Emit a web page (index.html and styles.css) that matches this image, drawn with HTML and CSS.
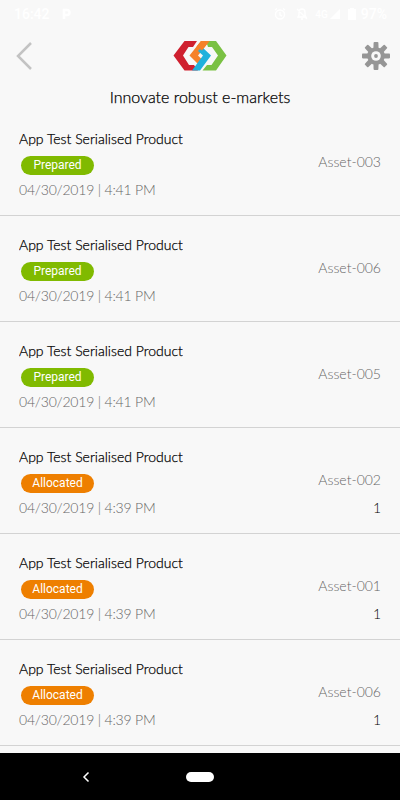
FILE: index.html
```html
<!DOCTYPE html>
<html lang="en">
<head>
    <meta charset="UTF-8">
    <meta name="viewport" content="width=device-width, initial-scale=1.0">
    <title>Assets</title>
    <link rel="stylesheet" href="styles.css">
</head>
<body>
    <div class="status">
        <span class="time">16:42</span>
        <svg class="parking" width="12" height="12" viewBox="0 0 12 12"><path d="M4 11V2h3a2.5 2.5 0 0 1 0 5H4" fill="none" stroke="#fff" stroke-width="2.5"/></svg>
        <div class="status-icons">
            <svg width="12" height="12" viewBox="0 0 12 12" fill="none" stroke="#fff" stroke-width="1.4"><circle cx="6" cy="6.5" r="4.5"/><path d="M6 4v3l2 1M1 2l2-1.500M11 2L9 .5"/></svg>
            <svg class="bell" width="12" height="12" viewBox="0 0 12 12" fill="none" stroke="#fff" stroke-width="1.4"><path d="M2 9h8L9 7V4a3 3 0 0 0-6 0v3zM5 11h2M1 1l10 10"/></svg>
            <span class="network">4G</span>
            <svg class="signal" width="10" height="10" viewBox="0 0 10 10"><path d="M0 10L10 0v10z" fill="#fff"/></svg>
            <svg class="battery" width="8" height="12" viewBox="0 0 8 12"><path d="M0 1h2V0h4v1h2v11H0z" fill="#fff"/></svg>
            <span class="percent">97%</span>
        </div>
    </div>
    <header class="header">
        <svg class="back" width="18" height="30" viewBox="0 0 18 30"><path d="M16 2L3 15l13 13" fill="none" stroke="#c3c3c3" stroke-width="2.500"/></svg>
        <svg class="logo" width="54" height="32" viewBox="0 0 54 32">
            <path d="M11.500 1H24l-4 6h-4.500L10 15.500 16 25h5l4 5.500H11.500L.5 15.500z" fill="#cf202f"/>
            <path d="M33 1h10l10.500 14.500L43 30.500H29.500L34 25h4.500l6.500-9.500L39 7h-4z" fill="#7ac143"/>
            <path d="M28 1h8.500L25 15.500l5 5-4 4.500-9.500-9.500z" fill="#f5822a"/>
            <path d="M29 7l9 8.500-11 15h-8L30 15.500l-5-4.500z" fill="#1fb1dc"/>
            <path d="M28 1h8.500L29 10.500l-5.500-4z" fill="#f5822a"/>
        </svg>
        <svg class="gear" width="28" height="28" viewBox="-14 -14 28 28">
            <defs><path id="tooth" d="M-2.600-7L-2.400-13.200Q-2.200-14-1.500-14h3Q2.200-14 2.400-13.200L2.600-7z"/></defs>
            <g fill="#969696">
                <use href="#tooth"/>
                <use href="#tooth" transform="rotate(45)"/>
                <use href="#tooth" transform="rotate(90)"/>
                <use href="#tooth" transform="rotate(135)"/>
                <use href="#tooth" transform="rotate(180)"/>
                <use href="#tooth" transform="rotate(225)"/>
                <use href="#tooth" transform="rotate(270)"/>
                <use href="#tooth" transform="rotate(315)"/>
                <circle r="8.800"/>
            </g>
            <circle r="4.800" fill="#f8f8f8"/>
            <circle r="1.900" fill="#969696"/>
        </svg>
    </header>
    <h1 class="title">Innovate robust e-markets</h1>
    <div class="list">
        <div class="item">
            <div class="info">
                <div class="name">App Test Serialised Product</div>
                <div class="badge prepared">Prepared</div>
                <div class="date">04/30/2019 | 4:41 PM</div>
            </div>
            <div class="side"><div class="asset">Asset-003</div></div>
        </div>
        <div class="item">
            <div class="info">
                <div class="name">App Test Serialised Product</div>
                <div class="badge prepared">Prepared</div>
                <div class="date">04/30/2019 | 4:41 PM</div>
            </div>
            <div class="side"><div class="asset">Asset-006</div></div>
        </div>
        <div class="item">
            <div class="info">
                <div class="name">App Test Serialised Product</div>
                <div class="badge prepared">Prepared</div>
                <div class="date">04/30/2019 | 4:41 PM</div>
            </div>
            <div class="side"><div class="asset">Asset-005</div></div>
        </div>
        <div class="item">
            <div class="info">
                <div class="name">App Test Serialised Product</div>
                <div class="badge allocated">Allocated</div>
                <div class="date">04/30/2019 | 4:39 PM</div>
            </div>
            <div class="side"><div class="asset">Asset-002</div><div class="count">1</div></div>
        </div>
        <div class="item">
            <div class="info">
                <div class="name">App Test Serialised Product</div>
                <div class="badge allocated">Allocated</div>
                <div class="date">04/30/2019 | 4:39 PM</div>
            </div>
            <div class="side"><div class="asset">Asset-001</div><div class="count">1</div></div>
        </div>
        <div class="item">
            <div class="info">
                <div class="name">App Test Serialised Product</div>
                <div class="badge allocated">Allocated</div>
                <div class="date">04/30/2019 | 4:39 PM</div>
            </div>
            <div class="side"><div class="asset">Asset-006</div><div class="count">1</div></div>
        </div>
    </div>
    <nav class="navbar">
        <svg class="nav-back" width="8" height="12" viewBox="0 0 8 12"><path d="M6.500 1.500L2 6l4.500 4.500" fill="none" stroke="#fff" stroke-width="1.500"/></svg>
        <div class="home"></div>
    </nav>
</body>
</html>
```
FILE: styles.css
```css
* {
    box-sizing: border-box;
}
body {
    margin: 0;
    height: 800px;
    display: flex;
    flex-direction: column;
    overflow: hidden;
    background-color: #f8f8f8;
    font-family: Lato, "Liberation Sans", sans-serif;
    font-weight: 300;
    color: #000;
}
/* 状态栏 */
.status {
    height: 28px;
    flex: none;
    display: flex;
    align-items: center;
    padding: 0 13px 0 14px;
    font: 500 14px Roboto, sans-serif;
    color: #fff;
}
.parking {
    margin-left: 10px;
}
.status-icons {
    margin-left: auto;
    display: flex;
    align-items: center;
}
.bell {
    margin-left: 10px;
}
.network {
    margin-left: 7px;
    font-size: 10px;
}
.signal {
    margin-left: 2px;
}
.battery {
    margin: 0 5px 0 8px;
}
.header {
    height: 56px;
    flex: none;
    display: flex;
    align-items: center;
    justify-content: space-between;
    padding: 0 10px 0 15px;
}
.logo {
    margin-left: 4px;
}
.title {
    margin: 0;
    height: 26px;
    flex: none;
    font-size: 16px;
    font-weight: 300;
    line-height: 26px;
    text-align: center;
    -webkit-text-stroke: 0.25px #000;
}
.list {
    height: 643px;
    flex: none;
    overflow: hidden;
}
.item {
    height: 106.08px;
    display: flex;
    justify-content: space-between;
    padding: 22px 19px 0 19px;
    border-bottom: 1px solid #d3d3d3;
}
.name {
    height: 14px;
    overflow: hidden;
    font-size: 14px;
    line-height: 14px;
    -webkit-text-stroke: 0.25px #000;
}
.badge {
    width: 73px;
    height: 19px;
    margin: 10px 0 0 2px;
    border-radius: 10px;
    font: 12px/18px Roboto, sans-serif;
    color: #fff;
    text-align: center;
}
.prepared {
    background-color: #80ba00;
}
.allocated {
    background-color: #ee7f00;
}
.date {
    margin-top: 6px;
    font-size: 14px;
    letter-spacing: -0.2px;
    line-height: 18px;
    color: #666;
}
.side {
    padding-top: 21px;
    font-size: 14px;
    line-height: 18px;
    text-align: right;
}
.asset {
    color: #666;
}
.count {
    margin-top: 10px;
}
/* 底部导航 */
.navbar {
    height: 47px;
    flex: none;
    display: flex;
    align-items: center;
    background-color: #000;
}
.nav-back {
    margin-left: 82px;
}
.home {
    width: 28px;
    height: 10px;
    margin-left: 96px;
    border-radius: 5px;
    background-color: #fff;
}
```
